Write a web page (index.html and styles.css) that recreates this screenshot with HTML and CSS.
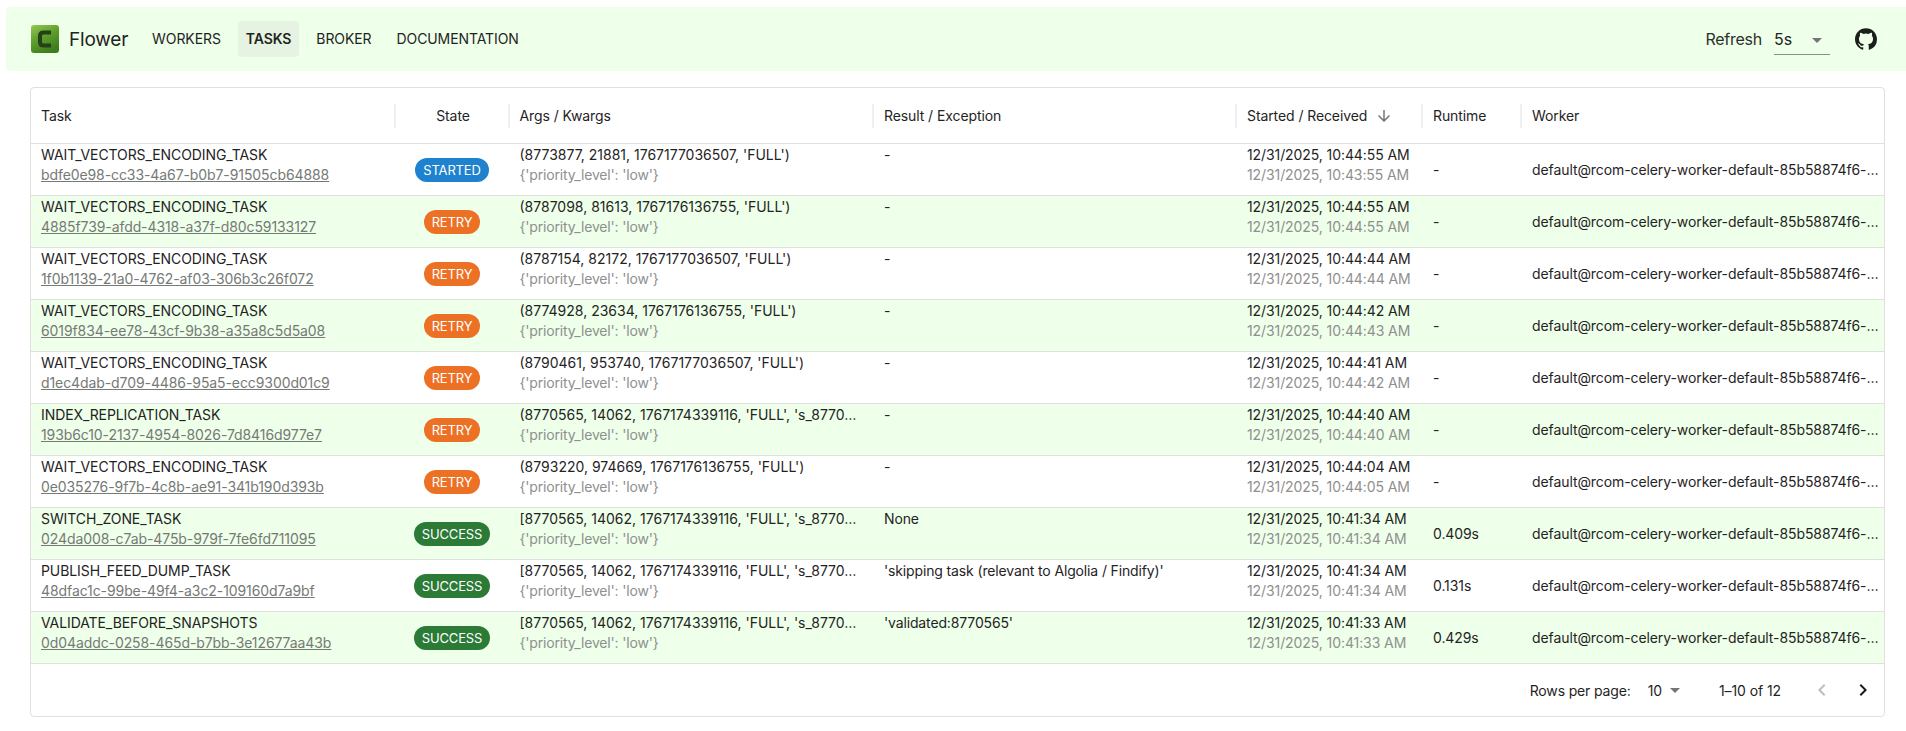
FILE: index.html
```html
<!DOCTYPE html>
<html lang="en">
<head>
<meta charset="utf-8">
<title>Flower</title>
<link rel="stylesheet" href="styles.css">
</head>
<body>
<header class="appbar">
  <div class="brand">
    <svg class="logo" viewBox="0 0 28 28" width="28" height="28" aria-hidden="true">
      <defs><linearGradient id="lg" x1="0" y1="0" x2="0.5" y2="1"><stop offset="0" stop-color="#96c954"/><stop offset="0.5" stop-color="#5f9f2d"/><stop offset="1" stop-color="#3f7d1e"/></linearGradient></defs>
      <rect width="28" height="28" rx="3" fill="url(#lg)"/>
      <path d="M20 7.5H12.5Q9 7.5 9 11V17Q9 20.5 12.5 20.5H20" fill="none" stroke="#24401a" stroke-width="4"/>
    </svg>
    <span class="brand-name">Flower</span>
  </div>
  <nav class="nav">
    <a class="nav-item">Workers</a>
    <a class="nav-item active">Tasks</a>
    <a class="nav-item">Broker</a>
    <a class="nav-item">Documentation</a>
  </nav>
  <div class="right">
    <span class="refresh">Refresh</span>
    <div class="select"><span>5s</span><svg class="caret" viewBox="0 0 10 5" width="10" height="5"><path d="M0 0h10L5 5z" fill="#757575"/></svg></div>
    <svg class="github" viewBox="0 0 24 24" width="24" height="24"><path fill="#1b1f1b" d="M12 1.3C5.9 1.3 1 6.2 1 12.3c0 4.9 3.2 9 7.5 10.4.55.1.75-.24.75-.53v-1.9c-3.06.66-3.7-1.48-3.7-1.48-.5-1.27-1.22-1.6-1.22-1.6-1-.68.08-.67.08-.67 1.1.08 1.68 1.13 1.68 1.13.98 1.68 2.57 1.2 3.2.91.1-.71.38-1.2.7-1.47-2.44-.28-5-1.22-5-5.43 0-1.2.43-2.18 1.13-2.95-.11-.28-.49-1.4.11-2.9 0 0 .92-.3 3.02 1.13a10.5 10.5 0 0 1 5.5 0c2.1-1.42 3.02-1.13 3.02-1.13.6 1.5.22 2.62.11 2.9.7.77 1.13 1.75 1.13 2.95 0 4.22-2.57 5.15-5.02 5.42.4.34.75 1.01.75 2.04v3.03c0 .29.2.64.76.53A11 11 0 0 0 23 12.3C23 6.2 18.1 1.3 12 1.3z"/></svg>
  </div>
</header>

<main class="card">
  <div class="row head">
    <div class="cell sep">Task</div>
    <div class="cell sep center">State</div>
    <div class="cell sep">Args / Kwargs</div>
    <div class="cell sep">Result / Exception</div>
    <div class="cell sep">Started / Received <svg class="sort" viewBox="0 0 24 24" width="18" height="18"><path fill="#757575" d="m20 12-1.41-1.41L13 16.17V4h-2v12.17l-5.58-5.59L4 12l8 8z"/></svg></div>
    <div class="cell sep">Runtime</div>
    <div class="cell">Worker</div>
  </div>

  <div class="row">
    <div class="cell two"><div class="main">WAIT_VECTORS_ENCODING_TASK</div><a class="uuid">bdfe0e98-cc33-4a67-b0b7-91505cb64888</a></div>
    <div class="cell middle center"><span class="chip started">STARTED</span></div>
    <div class="cell two"><div class="main">(8773877, 21881, 1767177036507, 'FULL')</div><div class="sub">{'priority_level': 'low'}</div></div>
    <div class="cell two"><div class="main">-</div></div>
    <div class="cell two"><div class="main">12/31/2025, 10:44:55 AM</div><div class="sub">12/31/2025, 10:43:55 AM</div></div>
    <div class="cell middle">-</div>
    <div class="cell middle">default@rcom-celery-worker-default-85b58874f6-…</div>
  </div>
  <div class="row alt">
    <div class="cell two"><div class="main">WAIT_VECTORS_ENCODING_TASK</div><a class="uuid">4885f739-afdd-4318-a37f-d80c59133127</a></div>
    <div class="cell middle center"><span class="chip retry">RETRY</span></div>
    <div class="cell two"><div class="main">(8787098, 81613, 1767176136755, 'FULL')</div><div class="sub">{'priority_level': 'low'}</div></div>
    <div class="cell two"><div class="main">-</div></div>
    <div class="cell two"><div class="main">12/31/2025, 10:44:55 AM</div><div class="sub">12/31/2025, 10:44:55 AM</div></div>
    <div class="cell middle">-</div>
    <div class="cell middle">default@rcom-celery-worker-default-85b58874f6-…</div>
  </div>
  <div class="row">
    <div class="cell two"><div class="main">WAIT_VECTORS_ENCODING_TASK</div><a class="uuid">1f0b1139-21a0-4762-af03-306b3c26f072</a></div>
    <div class="cell middle center"><span class="chip retry">RETRY</span></div>
    <div class="cell two"><div class="main">(8787154, 82172, 1767177036507, 'FULL')</div><div class="sub">{'priority_level': 'low'}</div></div>
    <div class="cell two"><div class="main">-</div></div>
    <div class="cell two"><div class="main">12/31/2025, 10:44:44 AM</div><div class="sub">12/31/2025, 10:44:44 AM</div></div>
    <div class="cell middle">-</div>
    <div class="cell middle">default@rcom-celery-worker-default-85b58874f6-…</div>
  </div>
  <div class="row alt">
    <div class="cell two"><div class="main">WAIT_VECTORS_ENCODING_TASK</div><a class="uuid">6019f834-ee78-43cf-9b38-a35a8c5d5a08</a></div>
    <div class="cell middle center"><span class="chip retry">RETRY</span></div>
    <div class="cell two"><div class="main">(8774928, 23634, 1767176136755, 'FULL')</div><div class="sub">{'priority_level': 'low'}</div></div>
    <div class="cell two"><div class="main">-</div></div>
    <div class="cell two"><div class="main">12/31/2025, 10:44:42 AM</div><div class="sub">12/31/2025, 10:44:43 AM</div></div>
    <div class="cell middle">-</div>
    <div class="cell middle">default@rcom-celery-worker-default-85b58874f6-…</div>
  </div>
  <div class="row">
    <div class="cell two"><div class="main">WAIT_VECTORS_ENCODING_TASK</div><a class="uuid">d1ec4dab-d709-4486-95a5-ecc9300d01c9</a></div>
    <div class="cell middle center"><span class="chip retry">RETRY</span></div>
    <div class="cell two"><div class="main">(8790461, 953740, 1767177036507, 'FULL')</div><div class="sub">{'priority_level': 'low'}</div></div>
    <div class="cell two"><div class="main">-</div></div>
    <div class="cell two"><div class="main">12/31/2025, 10:44:41 AM</div><div class="sub">12/31/2025, 10:44:42 AM</div></div>
    <div class="cell middle">-</div>
    <div class="cell middle">default@rcom-celery-worker-default-85b58874f6-…</div>
  </div>
  <div class="row alt">
    <div class="cell two"><div class="main">INDEX_REPLICATION_TASK</div><a class="uuid">193b6c10-2137-4954-8026-7d8416d977e7</a></div>
    <div class="cell middle center"><span class="chip retry">RETRY</span></div>
    <div class="cell two"><div class="main">(8770565, 14062, 1767174339116, 'FULL', 's_8770…</div><div class="sub">{'priority_level': 'low'}</div></div>
    <div class="cell two"><div class="main">-</div></div>
    <div class="cell two"><div class="main">12/31/2025, 10:44:40 AM</div><div class="sub">12/31/2025, 10:44:40 AM</div></div>
    <div class="cell middle">-</div>
    <div class="cell middle">default@rcom-celery-worker-default-85b58874f6-…</div>
  </div>
  <div class="row">
    <div class="cell two"><div class="main">WAIT_VECTORS_ENCODING_TASK</div><a class="uuid">0e035276-9f7b-4c8b-ae91-341b190d393b</a></div>
    <div class="cell middle center"><span class="chip retry">RETRY</span></div>
    <div class="cell two"><div class="main">(8793220, 974669, 1767176136755, 'FULL')</div><div class="sub">{'priority_level': 'low'}</div></div>
    <div class="cell two"><div class="main">-</div></div>
    <div class="cell two"><div class="main">12/31/2025, 10:44:04 AM</div><div class="sub">12/31/2025, 10:44:05 AM</div></div>
    <div class="cell middle">-</div>
    <div class="cell middle">default@rcom-celery-worker-default-85b58874f6-…</div>
  </div>
  <div class="row alt">
    <div class="cell two"><div class="main">SWITCH_ZONE_TASK</div><a class="uuid">024da008-c7ab-475b-979f-7fe6fd711095</a></div>
    <div class="cell middle center"><span class="chip success">SUCCESS</span></div>
    <div class="cell two"><div class="main">[8770565, 14062, 1767174339116, 'FULL', 's_8770…</div><div class="sub">{'priority_level': 'low'}</div></div>
    <div class="cell two"><div class="main">None</div></div>
    <div class="cell two"><div class="main">12/31/2025, 10:41:34 AM</div><div class="sub">12/31/2025, 10:41:34 AM</div></div>
    <div class="cell middle">0.409s</div>
    <div class="cell middle">default@rcom-celery-worker-default-85b58874f6-…</div>
  </div>
  <div class="row">
    <div class="cell two"><div class="main">PUBLISH_FEED_DUMP_TASK</div><a class="uuid">48dfac1c-99be-49f4-a3c2-109160d7a9bf</a></div>
    <div class="cell middle center"><span class="chip success">SUCCESS</span></div>
    <div class="cell two"><div class="main">[8770565, 14062, 1767174339116, 'FULL', 's_8770…</div><div class="sub">{'priority_level': 'low'}</div></div>
    <div class="cell two"><div class="main">'skipping task (relevant to Algolia / Findify)'</div></div>
    <div class="cell two"><div class="main">12/31/2025, 10:41:34 AM</div><div class="sub">12/31/2025, 10:41:34 AM</div></div>
    <div class="cell middle">0.131s</div>
    <div class="cell middle">default@rcom-celery-worker-default-85b58874f6-…</div>
  </div>
  <div class="row alt">
    <div class="cell two"><div class="main">VALIDATE_BEFORE_SNAPSHOTS</div><a class="uuid">0d04addc-0258-465d-b7bb-3e12677aa43b</a></div>
    <div class="cell middle center"><span class="chip success">SUCCESS</span></div>
    <div class="cell two"><div class="main">[8770565, 14062, 1767174339116, 'FULL', 's_8770…</div><div class="sub">{'priority_level': 'low'}</div></div>
    <div class="cell two"><div class="main">'validated:8770565'</div></div>
    <div class="cell two"><div class="main">12/31/2025, 10:41:33 AM</div><div class="sub">12/31/2025, 10:41:33 AM</div></div>
    <div class="cell middle">0.429s</div>
    <div class="cell middle">default@rcom-celery-worker-default-85b58874f6-…</div>
  </div>

  <footer class="pager">
    <span class="rows-label">Rows per page:</span>
    <span class="rows-value">10</span>
    <svg class="pager-caret" viewBox="0 0 10 5" width="10" height="5"><path d="M0 0h10L5 5z" fill="#757575"/></svg>
    <span class="range">1–10 of 12</span>
    <svg class="chev" viewBox="0 0 24 24" width="24" height="24"><path fill="#bdbdbd" d="M15.41 7.41 14 6l-6 6 6 6 1.41-1.41L10.83 12z"/></svg>
    <svg class="chev next" viewBox="0 0 24 24" width="24" height="24"><path fill="#1a1a1a" d="M10 6 8.59 7.41 13.17 12l-4.58 4.59L10 18l6-6z"/></svg>
  </footer>
</main>
</body>
</html>
```
FILE: styles.css
```css
* { box-sizing: border-box; }
html, body { margin: 0; padding: 0; }
body {
  font-family: Inter, "Liberation Sans", sans-serif;
  font-size: 14px;
  letter-spacing: -0.09px;
  color: #1f241f;
  background: #fff;
  padding-top: 7px;
  height: 731px;
  overflow: hidden;
}
.appbar {
  display: flex;
  align-items: center;
  height: 64px;
  margin-left: 6px;
  padding: 0 28px 0 25px;
  background: #eeffea;
  border-radius: 4px 0 0 4px;
}
.brand { display: flex; align-items: center; gap: 10px; }
.logo { display: block; }
.brand-name { font-size: 19px; font-weight: 400; letter-spacing: -0.2px; }
.nav { display: flex; gap: 9px; margin-left: 16px; }
.nav-item {
  padding: 0 8px;
  height: 36px;
  line-height: 36px;
  text-transform: uppercase;
  font-size: 14px;
  font-weight: 400;
  border-radius: 4px;
}
.nav-item.active { background: #e6f3e2; font-weight: 600; }
.right { display: flex; align-items: center; margin-left: auto; }
.refresh { font-size: 16px; margin-right: 12px; color: #2a2f2a; letter-spacing: -0.25px; }
.select {
  display: flex;
  align-items: center;
  justify-content: space-between;
  width: 56px;
  height: 32px;
  padding-right: 8px;
  font-size: 16px;
  border-bottom: 1px solid #8a8f8a;
}
.caret { margin-top: 4px; }
.github { margin-left: 24px; }

.card {
  margin: 16px 21px 0 30px;
  height: 630px;
  border: 1px solid #e0e0e0;
  border-radius: 4px;
  overflow: hidden;
}
.row {
  display: grid;
  grid-template-columns: 365px 114px 364px 363px 186px 99px 1fr;
  height: 52px;
  border-bottom: 1px solid #e0e0e0;
}
.row.alt { background: #eeffea; }
.row.head { height: 56px; font-weight: 400; }
.cell {
  padding: 0 10px;
  white-space: nowrap;
  overflow: hidden;
  line-height: 20px;
}
.cell:nth-child(3) { padding-left: 9.5px; }
.cell:nth-child(3) .main { letter-spacing: 0; }
.cell:nth-child(3) .sub { letter-spacing: -0.17px; }
.cell:nth-child(4) .main { letter-spacing: -0.14px; }
.head .cell { display: flex; align-items: center; gap: 8px; position: relative; }
.head .center { justify-content: center; }
.head .sep::after {
  content: "";
  position: absolute;
  right: 0;
  top: 16px;
  height: 24px;
  width: 2px;
  background: #f0f0f0;
}
.two { padding-top: 1px; }
.middle { display: flex; align-items: center; }
.center { justify-content: center; }
.sub { color: #8f8f8f; }
.uuid { color: #757a75; text-decoration: underline; display: block; }
.chip {
  display: inline-flex;
  align-items: center;
  height: 24px;
  padding: 0 8px;
  border-radius: 12px;
  font-size: 13px;
  letter-spacing: -0.15px;
  color: #fff;
  position: relative;
  left: -1px;
}
.started { background: #1f82cf; }
.retry { background: #ed7125; }
.success { background: #2b7a36; }
.sort { flex: none; }

.pager {
  display: flex;
  align-items: center;
  justify-content: flex-end;
  height: 52px;
  padding-right: 9px;
  font-size: 14px;
}
.rows-label { letter-spacing: -0.15px; }
.rows-value { margin-left: 17px; }
.pager-caret { margin-left: 8px; }
.range { margin-left: 39px; }
.chev { margin-left: 29px; }
.next { margin-left: 17px; }
```
